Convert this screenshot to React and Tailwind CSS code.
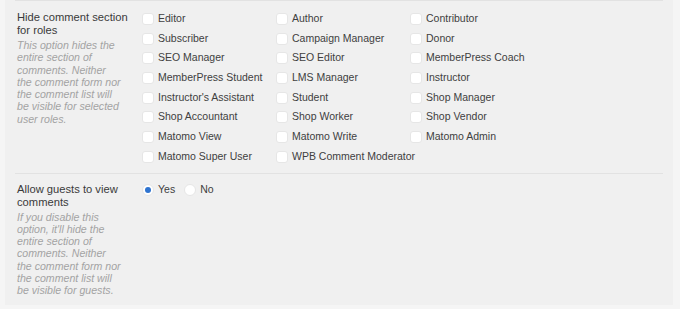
import React from "react";

const roles = [
  "Editor", "Author", "Contributor",
  "Subscriber", "Campaign Manager", "Donor",
  "SEO Manager", "SEO Editor", "MemberPress Coach",
  "MemberPress Student", "LMS Manager", "Instructor",
  "Instructor's Assistant", "Student", "Shop Manager",
  "Shop Accountant", "Shop Worker", "Shop Vendor",
  "Matomo View", "Matomo Write", "Matomo Admin",
  "Matomo Super User", "WPB Comment Moderator",
];

function Checkbox({ label }) {
  return (
    <label className="flex items-center h-[19.7px] gap-[4px]">
      <span className="w-[12px] h-[12px] rounded-[3px] bg-white border border-[#e6e6e6] shrink-0" />
      <span className="text-[10.5px] text-[#404040] whitespace-nowrap">{label}</span>
    </label>
  );
}

function Radio({ label, checked }) {
  return (
    <label className="flex items-center gap-[4px]">
      <span className="w-[12px] h-[12px] rounded-full bg-white border border-[#e6e6e6] flex items-center justify-center shrink-0">
        {checked && <span className="w-[6px] h-[6px] rounded-full bg-[#2f74d0]" />}
      </span>
      <span className="text-[10.5px] text-[#404040]">{label}</span>
    </label>
  );
}

function Desc({ lines }) {
  return (
    <div className="text-[10.6px] leading-[12.3px] italic text-[#a3a3a3] mt-[2px]">
      {lines.map((l, i) => (
        <div key={i} className="whitespace-nowrap">{l}</div>
      ))}
    </div>
  );
}

export default function App() {
  return (
    <div
      className="w-[680px] h-[309px] bg-[#f5f5f5] pl-[5px] pr-[7px] overflow-hidden"
      style={{ fontFamily: '"Liberation Sans", Arial, sans-serif' }}
    >
      <div className="bg-[#f0f0f0] h-[305px] px-[10px]">
        <div className="h-[1px] bg-[#e2e2e2]" />
        <div className="flex pt-[8px] pb-[6px]">
          <div className="w-[127px] pl-[2px] shrink-0">
            <div className="text-[11.2px] leading-[13px] text-[#3a3a3a] pt-[2px]">
              <div>Hide comment section</div>
              <div>for roles</div>
            </div>
            <Desc
              lines={[
                "This option hides the",
                "entire section of",
                "comments. Neither",
                "the comment form nor",
                "the comment list will",
                "be visible for selected",
                "user roles.",
              ]}
            />
          </div>
          <div className="grid grid-cols-[134px_134px_134px]">
            {roles.map((r) => (
              <Checkbox key={r} label={r} />
            ))}
          </div>
        </div>
        <div className="h-[1px] bg-[#e2e2e2]" />
        <div className="flex pt-[9px]">
          <div className="w-[127px] pl-[2px] shrink-0">
            <div className="text-[11.2px] leading-[13px] text-[#3a3a3a]">
              <div>Allow guests to view</div>
              <div>comments</div>
            </div>
            <Desc
              lines={[
                "If you disable this",
                "option, it'll hide the",
                "entire section of",
                "comments. Neither",
                "the comment form nor",
                "the comment list will",
                "be visible for guests.",
              ]}
            />
          </div>
          <div className="flex gap-[9px] h-[14px] items-center">
            <Radio label="Yes" checked />
            <Radio label="No" />
          </div>
        </div>
      </div>
    </div>
  );
}
